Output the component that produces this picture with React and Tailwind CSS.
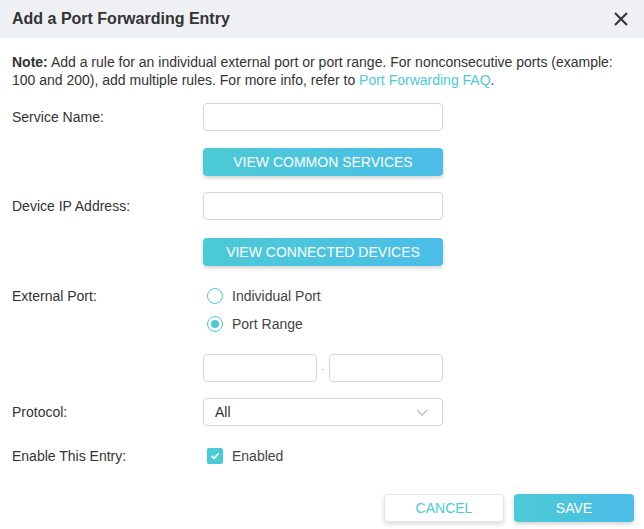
import { useState } from "react";

function Field({ label, children }) {
  return (
    <div className="flex items-center">
      <div className="w-[191px] shrink-0 text-[14px] text-[#333]">{label}</div>
      <div className="w-[240px]">{children}</div>
    </div>
  );
}

function TextBox({ width = "w-full" }) {
  return (
    <input
      type="text"
      className={`h-[28px] ${width} shrink-0 rounded-[4px] border border-[#d6d6d6] bg-white px-3 text-[14px] text-[#333] outline-none`}
    />
  );
}

function GradientButton({ children, width = "w-full" }) {
  return (
    <button className={`h-[28px] ${width} rounded-[4px] bg-gradient-to-r from-[#4ccad5] to-[#4bbde8] text-[14px] uppercase text-white shadow-[0_2px_4px_rgba(0,0,0,0.18)]`}>
      {children}
    </button>
  );
}

function Radio({ checked, label, onClick }) {
  return (
    <div className="flex h-[28px] cursor-pointer items-center" onClick={onClick}>
      <span className="ml-[4px] flex h-[16px] w-[16px] items-center justify-center rounded-full border-[1.5px] border-[#4acbd6] bg-white">
        {checked && <span className="h-[8px] w-[8px] rounded-full bg-[#4acbd6]" />}
      </span>
      <span className="ml-[9px] text-[14px] text-[#444]">{label}</span>
    </div>
  );
}

export default function App() {
  const [portType, setPortType] = useState("range");
  const [enabled, setEnabled] = useState(true);

  return (
    <div className="h-[529px] w-[644px] overflow-hidden bg-white font-['Liberation_Sans',Arial,sans-serif]">
      <div className="flex h-[38px] items-center justify-between bg-[#eef0f4] px-3">
        <h1 className="text-[16px] font-bold text-[#333]">Add a Port Forwarding Entry</h1>
        <button className="mr-[3px] flex h-[16px] w-[16px] items-center justify-center">
          <svg width="14" height="14" viewBox="0 0 14 14">
            <path d="M1 1 L13 13 M13 1 L1 13" stroke="#333" strokeWidth="2" />
          </svg>
        </button>
      </div>

      <div className="px-3">
        <p className="pt-[15px] text-[14px] leading-[18px] text-[#333]">
          <b>Note:</b> Add a rule for an individual external port or port range. For nonconsecutive ports (example: 100 and 200), add multiple rules. For more info, refer to{" "}
          <a className="text-[#4acbd6]">Port Forwarding FAQ</a>.
        </p>

        <div className="mt-[14px]">
          <Field label="Service Name:">
            <TextBox />
          </Field>
        </div>
        <div className="mt-[17px]">
          <Field label="">
            <GradientButton>View Common Services</GradientButton>
          </Field>
        </div>
        <div className="mt-[16px]">
          <Field label="Device IP Address:">
            <TextBox />
          </Field>
        </div>
        <div className="mt-[18px]">
          <Field label="">
            <GradientButton>View Connected Devices</GradientButton>
          </Field>
        </div>

        <div className="mt-[16px] flex">
          <div className="flex h-[28px] w-[191px] shrink-0 items-center text-[14px] text-[#333]">External Port:</div>
          <div className="flex flex-col">
            <Radio label="Individual Port" checked={portType === "single"} onClick={() => setPortType("single")} />
            <Radio label="Port Range" checked={portType === "range"} onClick={() => setPortType("range")} />
          </div>
        </div>

        <div className="mt-[16px]">
          <Field label="">
            <div className="flex items-center">
              <TextBox width="w-[114px]" />
              <span className="w-[12px] text-center text-[11px] leading-none text-[#cfcfcf]">-</span>
              <TextBox width="w-[114px]" />
            </div>
          </Field>
        </div>

        <div className="mt-[16px]">
          <Field label="Protocol:">
            <div className="flex h-[28px] w-full items-center justify-between rounded-[4px] border border-[#d6d6d6] bg-white pl-[11px] pr-[14px]">
              <span className="text-[14px] text-[#333]">All</span>
              <svg width="12" height="7" viewBox="0 0 12 7">
                <path d="M1 1 L6 6 L11 1" fill="none" stroke="#bdbdbd" strokeWidth="1.3" />
              </svg>
            </div>
          </Field>
        </div>

        <div className="mt-[16px]">
          <Field label="Enable This Entry:">
            <div className="flex h-[28px] cursor-pointer items-center" onClick={() => setEnabled(!enabled)}>
              <span className={`ml-[4px] flex h-[16px] w-[16px] items-center justify-center rounded-[2px] ${enabled ? "bg-[#4acbd6]" : "border border-[#4acbd6] bg-white"}`}>
                {enabled && (
                  <svg width="10" height="8" viewBox="0 0 10 8">
                    <path d="M1.5 4 L4 6.3 L8.5 1.5" fill="none" stroke="#fff" strokeWidth="1.8" />
                  </svg>
                )}
              </span>
              <span className="ml-[9px] text-[14px] text-[#444]">Enabled</span>
            </div>
          </Field>
        </div>
      </div>

      <div className="mt-[24px] flex justify-end gap-[10px] pr-[10px]">
        <button className="h-[28px] w-[120px] rounded-[4px] border border-[#e6e6e6] bg-white text-[14px] text-[#4acbd6] shadow-[0_2px_4px_rgba(0,0,0,0.15)]">
          CANCEL
        </button>
        <GradientButton width="w-[120px]">Save</GradientButton>
      </div>
    </div>
  );
}
